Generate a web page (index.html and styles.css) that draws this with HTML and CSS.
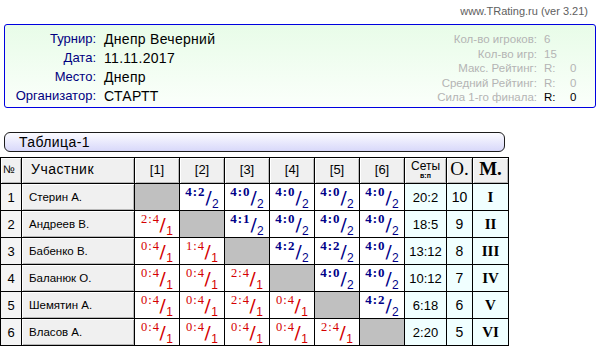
FILE: index.html
```html
<!DOCTYPE html>
<html lang="ru">
<head>
<meta charset="utf-8">
<title>Таблица-1</title>
<link rel="stylesheet" href="styles.css">
</head>
<body>
<div class="site">www.TRating.ru (ver 3.21)</div>
<div class="info">
  <div class="meta">
    <span class="lbl">Турнир:</span><span class="val">Днепр Вечерний</span>
    <span class="lbl">Дата:</span><span class="val">11.11.2017</span>
    <span class="lbl">Место:</span><span class="val">Днепр</span>
    <span class="lbl">Организатор:</span><span class="val">СТАРТТ</span>
  </div>
  <div class="stats">
    <span class="slb">Кол-во игроков:</span><span class="svl">6</span>
    <span class="slb">Кол-во игр:</span><span class="svl">15</span>
    <span class="slb">Макс. Рейтинг:</span><span class="svl"><span class="r">R:</span>0</span>
    <span class="slb">Средний Рейтинг:</span><span class="svl"><span class="r">R:</span>0</span>
    <span class="slb">Сила 1-го финала:</span><span class="svl dark"><span class="r">R:</span>0</span>
  </div>
</div>
<div class="caption">Таблица-1</div>
<table class="grid">
  <colgroup>
    <col class="c-no"><col class="c-name">
    <col class="c-g"><col class="c-g"><col class="c-g"><col class="c-g"><col class="c-g"><col class="c-g">
    <col class="c-sets"><col class="c-pts"><col class="c-pl">
  </colgroup>
  <thead>
    <tr>
      <th class="h-no">№</th><th class="h-name">Участник</th>
      <th>[1]</th><th>[2]</th><th>[3]</th><th>[4]</th><th>[5]</th><th>[6]</th>
      <th class="h-sets">Сеты<span class="vp">в:п</span></th>
      <th class="h-big">О.</th><th class="h-big h-bold">М.</th>
    </tr>
  </thead>
  <tbody>
    <tr>
      <td class="no">1</td><td class="name">Стерин А.</td>
      <td class="x"></td>
      <td class="w"><div class="sw"><span class="n">4:2</span><span class="sk">/</span><span class="pt">2</span></div></td>
      <td class="w"><div class="sw"><span class="n">4:0</span><span class="sk">/</span><span class="pt">2</span></div></td>
      <td class="w"><div class="sw"><span class="n">4:0</span><span class="sk">/</span><span class="pt">2</span></div></td>
      <td class="w"><div class="sw"><span class="n">4:0</span><span class="sk">/</span><span class="pt">2</span></div></td>
      <td class="w"><div class="sw"><span class="n">4:0</span><span class="sk">/</span><span class="pt">2</span></div></td>
      <td class="sets">20:2</td><td class="pts">10</td><td class="pl">I</td>
    </tr>
    <tr>
      <td class="no">2</td><td class="name">Андреев В.</td>
      <td class="l"><div class="sw"><span class="n">2:4</span><span class="sk">/</span><span class="pt">1</span></div></td>
      <td class="x"></td>
      <td class="w"><div class="sw"><span class="n">4:1</span><span class="sk">/</span><span class="pt">2</span></div></td>
      <td class="w"><div class="sw"><span class="n">4:0</span><span class="sk">/</span><span class="pt">2</span></div></td>
      <td class="w"><div class="sw"><span class="n">4:0</span><span class="sk">/</span><span class="pt">2</span></div></td>
      <td class="w"><div class="sw"><span class="n">4:0</span><span class="sk">/</span><span class="pt">2</span></div></td>
      <td class="sets">18:5</td><td class="pts">9</td><td class="pl">II</td>
    </tr>
    <tr>
      <td class="no">3</td><td class="name">Бабенко В.</td>
      <td class="l"><div class="sw"><span class="n">0:4</span><span class="sk">/</span><span class="pt">1</span></div></td>
      <td class="l"><div class="sw"><span class="n">1:4</span><span class="sk">/</span><span class="pt">1</span></div></td>
      <td class="x"></td>
      <td class="w"><div class="sw"><span class="n">4:2</span><span class="sk">/</span><span class="pt">2</span></div></td>
      <td class="w"><div class="sw"><span class="n">4:2</span><span class="sk">/</span><span class="pt">2</span></div></td>
      <td class="w"><div class="sw"><span class="n">4:0</span><span class="sk">/</span><span class="pt">2</span></div></td>
      <td class="sets">13:12</td><td class="pts">8</td><td class="pl">III</td>
    </tr>
    <tr>
      <td class="no">4</td><td class="name">Баланюк О.</td>
      <td class="l"><div class="sw"><span class="n">0:4</span><span class="sk">/</span><span class="pt">1</span></div></td>
      <td class="l"><div class="sw"><span class="n">0:4</span><span class="sk">/</span><span class="pt">1</span></div></td>
      <td class="l"><div class="sw"><span class="n">2:4</span><span class="sk">/</span><span class="pt">1</span></div></td>
      <td class="x"></td>
      <td class="w"><div class="sw"><span class="n">4:0</span><span class="sk">/</span><span class="pt">2</span></div></td>
      <td class="w"><div class="sw"><span class="n">4:0</span><span class="sk">/</span><span class="pt">2</span></div></td>
      <td class="sets">10:12</td><td class="pts">7</td><td class="pl">IV</td>
    </tr>
    <tr>
      <td class="no">5</td><td class="name">Шемятин А.</td>
      <td class="l"><div class="sw"><span class="n">0:4</span><span class="sk">/</span><span class="pt">1</span></div></td>
      <td class="l"><div class="sw"><span class="n">0:4</span><span class="sk">/</span><span class="pt">1</span></div></td>
      <td class="l"><div class="sw"><span class="n">2:4</span><span class="sk">/</span><span class="pt">1</span></div></td>
      <td class="l"><div class="sw"><span class="n">0:4</span><span class="sk">/</span><span class="pt">1</span></div></td>
      <td class="x"></td>
      <td class="w"><div class="sw"><span class="n">4:2</span><span class="sk">/</span><span class="pt">2</span></div></td>
      <td class="sets">6:18</td><td class="pts">6</td><td class="pl">V</td>
    </tr>
    <tr>
      <td class="no">6</td><td class="name">Власов А.</td>
      <td class="l"><div class="sw"><span class="n">0:4</span><span class="sk">/</span><span class="pt">1</span></div></td>
      <td class="l"><div class="sw"><span class="n">0:4</span><span class="sk">/</span><span class="pt">1</span></div></td>
      <td class="l"><div class="sw"><span class="n">0:4</span><span class="sk">/</span><span class="pt">1</span></div></td>
      <td class="l"><div class="sw"><span class="n">0:4</span><span class="sk">/</span><span class="pt">1</span></div></td>
      <td class="l"><div class="sw"><span class="n">2:4</span><span class="sk">/</span><span class="pt">1</span></div></td>
      <td class="x"></td>
      <td class="sets">2:20</td><td class="pts">5</td><td class="pl">VI</td>
    </tr>
  </tbody>
</table>
</body>
</html>
```
FILE: styles.css
```css
html, body {
  margin: 0;
  padding: 0;
  background: #fff;
}
body {
  font-family: "Liberation Sans", Arial, sans-serif;
  color: #000;
}
.site {
  height: 24px;
  box-sizing: border-box;
  padding: 4px 12px 0 0;
  text-align: right;
  font-size: 11px;
  line-height: 14px;
  color: #606060;
}
.info {
  margin: 0 4px;
  height: 84px;
  box-sizing: border-box;
  border: 1px solid #0000e0;
  border-radius: 3px;
  background: linear-gradient(#e8fce8, #fbfffb);
  display: flex;
  justify-content: space-between;
}
.meta {
  display: grid;
  grid-template-columns: 91px auto;
  column-gap: 8px;
  grid-auto-rows: 19px;
  align-items: center;
  padding-top: 4px;
}
.lbl {
  text-align: right;
  color: #000080;
  font-size: 13px;
}
.val {
  font-size: 14px;
  letter-spacing: 0.3px;
}
.stats {
  display: grid;
  grid-template-columns: auto 40px;
  column-gap: 7px;
  grid-auto-rows: 14.5px;
  align-items: center;
  padding: 7px 11px 0 0;
  font-size: 11.5px;
  color: #b4b4b4;
}
.slb {
  text-align: right;
}
.svl.dark {
  color: #000;
}
.r {
  display: inline-block;
  width: 26px;
}
.caption {
  margin: 24px 0 0 4px;
  width: 501px;
  height: 20px;
  box-sizing: border-box;
  border: 1px solid #1c1c1c;
  border-radius: 6px;
  background: linear-gradient(#fbfbff, #d8d8fa);
  padding-left: 14px;
  font-size: 14px;
  letter-spacing: 0.4px;
  line-height: 18px;
}
.grid {
  margin-top: 5px;
  border-collapse: separate;
  border-spacing: 0;
  table-layout: fixed;
  width: 509px;
  border-left: 1px solid #000;
  border-top: 1px solid #000;
}
.c-no { width: 21px; }
.c-name { width: 113px; }
.c-g { width: 45px; }
.c-sets { width: 42px; }
.c-pts { width: 26px; }
.c-pl { width: 36px; }
.grid th, .grid td {
  border-right: 1px solid #000;
  border-bottom: 1px solid #000;
  padding: 0;
  box-sizing: border-box;
}
.grid thead tr { height: 26px; }
.grid tbody tr { height: 27px; }
.grid th {
  background: #f0f0f0;
  box-shadow: inset 1px 1px 0 #fff, inset -1px -1px 0 #b8b8b8;
  font-weight: normal;
  font-size: 13px;
  text-align: center;
  vertical-align: middle;
  padding-bottom: 3px;
}
.grid th.h-no {
  font-size: 11px;
  text-align: left;
  padding-left: 2px;
}
.grid th.h-name {
  text-align: left;
  padding-left: 9px;
  font-size: 14px;
  letter-spacing: 0.5px;
}
.grid th.h-sets {
  font-size: 12px;
  line-height: 12px;
  padding-bottom: 2px;
}
.vp {
  display: block;
  font-size: 7px;
  font-weight: bold;
  line-height: 8px;
}
.grid th.h-big {
  font-family: "Liberation Serif", "Times New Roman", serif;
  font-size: 19px;
}
.grid th.h-bold {
  font-weight: bold;
}
.grid td.no {
  background: #f4f4f4;
  text-align: center;
  font-size: 13px;
}
.grid td.name {
  background: #f0f0f0;
  box-shadow: inset 1px 1px 0 #fff, inset -1px -1px 0 #b8b8b8;
  padding-left: 7px;
  font-size: 11.5px;
}
.grid td.x {
  background: #c0c0c0;
}
.grid td.w, .grid td.l {
  background: #fff;
  vertical-align: top;
}
.sw {
  display: flex;
  justify-content: center;
  height: 26px;
}
.n {
  font-family: "Liberation Serif", "Times New Roman", serif;
  font-size: 13px;
  line-height: 12px;
  margin-top: 2px;
  letter-spacing: 1px;
}
.sk {
  font-family: "DejaVu Sans", sans-serif;
  font-size: 16px;
  line-height: 16px;
  margin: 7px 0 0 0;
  transform: scale(1.15, 1.05);
}
.pt {
  font-size: 12px;
  line-height: 12px;
  margin: 14px 0 0 1px;
}
.w { color: #000088; }
.w .n { font-weight: bold; }
.l { color: #d40000; }
.l .n { font-size: 12.5px; }
.grid td.sets, .grid td.pts, .grid td.pl {
  background: #f0ffff;
  text-align: center;
}
.grid td.sets { font-size: 13px; }
.grid td.pts { font-size: 14px; }
.grid td.pl {
  font-family: "Liberation Serif", "Times New Roman", serif;
  font-weight: bold;
  font-size: 15px;
}
```
